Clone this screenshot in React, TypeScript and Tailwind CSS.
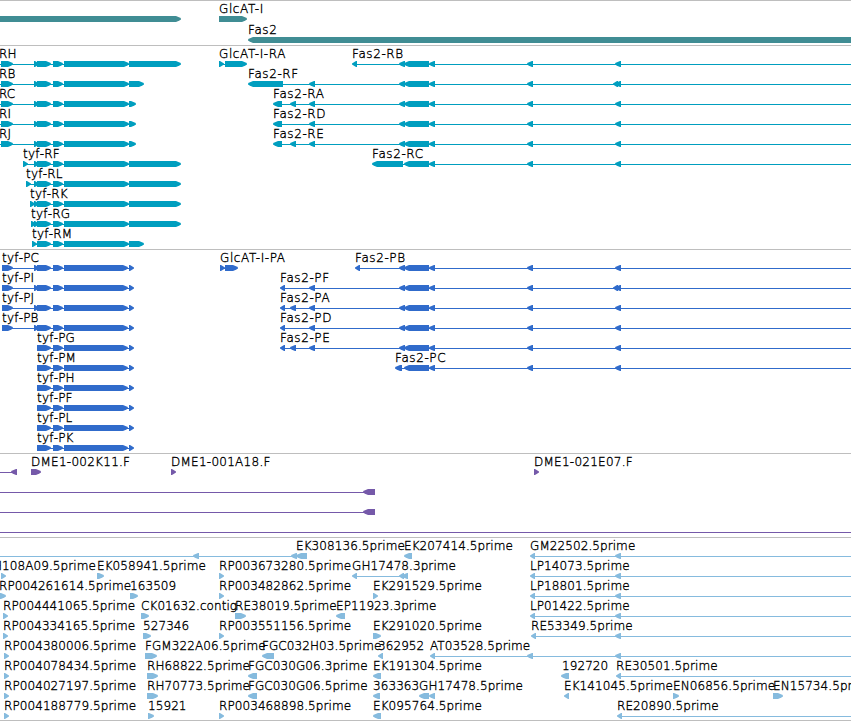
import React from "react";

type Feature = [number, number, "r" | "l"];
type Label = [number, string];
interface Row {
  labels?: Label[];
  features?: Feature[];
  lines?: [number, number][];
}

const WIDTH = 851;

// Head-only arrow for short features, block with a pointed end otherwise.
function featurePath([a, b, dir]: Feature) {
  const head = Math.min(6, b - a);
  if (dir === "r") return `M${a} 0H${b - head + 1}L${b - 2} 1.2L${b} 2.4V3.6L${b - 2} 4.8L${b - head + 1} 6H${a}Z`;
  return `M${b} 0H${a + head - 1}L${a + 2} 1.2L${a} 2.4V3.6L${a + 2} 4.8L${a + head - 1} 6H${b}Z`;
}

function labelTracking(text: string) {
  if (text.startsWith("Fas2") || text.startsWith("Glc")) return "tracking-[0.6px]";
  if (text.startsWith("tyf")) return "tracking-[0.2px]";
  if (text.startsWith("DME1")) return "tracking-[0.26px]";
  return "tracking-[0.08px]";
}

function TrackRow({ row, color, tall }: { row: Row; color: string; tall?: boolean }) {
  return (
    <div className={`relative w-full shrink-0 ${tall ? "h-[21px]" : "h-5"}`}>
      <svg className="block overflow-visible" width={WIDTH} height={20}>
        <g transform="translate(0 15)" fill={color}>
          {(row.lines ?? []).map(([a, b], i) => (
            <rect key={i} x={a} y={3} width={b - a} height={1} />
          ))}
          {(row.features ?? []).map((f, i) => (
            <path key={i} d={featurePath(f)} />
          ))}
        </g>
      </svg>
      {(row.labels ?? []).map(([x, text]) => (
        <span
          key={text}
          className={`absolute top-px whitespace-pre leading-[14px] ${labelTracking(text)}`}
          style={{ left: x }}
        >
          {text}
        </span>
      ))}
    </div>
  );
}

const geneRows: Row[] = [
  { labels: [[219, "GlcAT-I"]], features: [[-10, 181, "r"], [219, 247, "r"]] },
  { labels: [[248, "Fas2"]], features: [[248, 870, "l"]] },
];

const fasTail: Feature[] = [[404, 429, "l"], [429, 435, "l"], [527, 533, "l"], [615, 621, "l"]];
const fasMid: Feature[] = [[399, 405, "l"], ...fasTail];

const tyf = (last: number, ...first: Feature[]): Feature[] => [
  ...first, [37, 51, "r"], [53, 63, "r"], [64, 129, "r"], [129, last, "r"],
];
const notch: Feature = [34, 39, "r"];

const transcriptRows: Row[] = [
  {
    labels: [[-1, "RH"], [219, "GlcAT-I-RA"], [352, "Fas2-RB"]],
    lines: [[0, 180], [219, 240], [353, 851]],
    features: [...tyf(181, [1, 13, "r"], notch), [219, 224, "r"], [225, 247, "r"], [352, 357, "l"], ...fasMid],
  },
  {
    labels: [[-1, "RB"], [248, "Fas2-RF"]],
    lines: [[0, 140], [255, 851]],
    features: [...tyf(144, [1, 13, "r"], notch), [248, 283, "l"], [309, 315, "l"], ...fasMid, [613, 618, "l"]],
  },
  {
    labels: [[-1, "RC"], [273, "Fas2-RA"]],
    lines: [[0, 135], [280, 851]],
    features: [...tyf(136, [1, 13, "r"], notch), [273, 282, "l"], [290, 296, "l"], [309, 315, "l"], ...fasMid],
  },
  {
    labels: [[-1, "RI"], [273, "Fas2-RD"]],
    lines: [[0, 135], [280, 851]],
    features: [...tyf(136, [1, 13, "r"], notch), [273, 282, "l"], [309, 315, "l"], ...fasMid],
  },
  {
    labels: [[-1, "RJ"], [273, "Fas2-RE"]],
    lines: [[0, 135], [280, 851]],
    features: [...tyf(136, [1, 13, "r"], notch), [273, 282, "l"], [290, 296, "l"], [309, 315, "l"], ...fasMid],
  },
  {
    labels: [[23, "tyf-RF"], [372, "Fas2-RC"]],
    lines: [[23, 180], [380, 851]],
    features: [...tyf(181, [23, 28, "r"], notch), [372, 403, "l"], ...fasTail],
  },
  { labels: [[26, "tyf-RL"]], lines: [[26, 180]], features: tyf(181, [26, 31, "r"], notch) },
  { labels: [[30, "tyf-RK"]], lines: [[30, 180]], features: tyf(181, [30, 35, "r"], notch) },
  { labels: [[31, "tyf-RG"]], lines: [[31, 180]], features: tyf(181, [31, 36, "r"], notch) },
  { labels: [[32, "tyf-RM"]], lines: [[32, 140]], features: tyf(144, [32, 37, "r"]) },
];

const tyfP = (...first: Feature[]): Feature[] => [
  ...first, [37, 51, "r"], [53, 63, "r"], [64, 128, "r"], [129, 134, "r"],
];
const shortP = (name: string): Row => ({
  labels: [[37, name]],
  lines: [[37, 133]],
  features: tyfP(),
});

const proteinRows: Row[] = [
  {
    labels: [[2, "tyf-PC"], [220, "GlcAT-I-PA"], [355, "Fas2-PB"]],
    lines: [[2, 133], [220, 235], [356, 851]],
    features: [...tyfP([2, 13, "r"], notch), [220, 225, "r"], [225, 238, "r"], [355, 360, "l"], ...fasMid],
  },
  {
    labels: [[2, "tyf-PI"], [280, "Fas2-PF"]],
    lines: [[2, 133], [281, 851]],
    features: [...tyfP([2, 13, "r"], notch), [280, 285, "l"], [309, 315, "l"], ...fasMid, [613, 618, "l"]],
  },
  {
    labels: [[2, "tyf-PJ"], [280, "Fas2-PA"]],
    lines: [[2, 133], [281, 851]],
    features: [...tyfP([2, 13, "r"], notch), [280, 285, "l"], [290, 296, "l"], [309, 315, "l"], ...fasMid],
  },
  {
    labels: [[2, "tyf-PB"], [280, "Fas2-PD"]],
    lines: [[2, 133], [281, 851]],
    features: [...tyfP([2, 13, "r"], notch), [280, 285, "l"], [309, 315, "l"], ...fasMid],
  },
  {
    labels: [[37, "tyf-PG"], [280, "Fas2-PE"]],
    lines: [[37, 133], [281, 851]],
    features: [...tyfP(), [280, 285, "l"], [290, 296, "l"], [309, 315, "l"], ...fasMid],
  },
  {
    labels: [[37, "tyf-PM"], [395, "Fas2-PC"]],
    lines: [[37, 133], [396, 851]],
    features: [...tyfP(), [395, 402, "l"], ...fasTail],
  },
  shortP("tyf-PH"),
  shortP("tyf-PF"),
  shortP("tyf-PL"),
  shortP("tyf-PK"),
];

const bacRows: Row[] = [
  {
    labels: [[31, "DME1-002K11.F"], [171, "DME1-001A18.F"], [534, "DME1-021E07.F"]],
    lines: [[0, 16]],
    features: [[11, 17, "l"], [31, 41, "r"], [171, 176, "r"], [534, 539, "r"]],
  },
  { lines: [[0, 370]], features: [[363, 375, "l"]] },
  { lines: [[0, 370]], features: [[363, 375, "l"]] },
  { lines: [[0, 851]] },
];

const estRows: Row[] = [
  {
    labels: [[296, "EK308136.5prime"], [404, "EK207414.5prime"], [530, "GM22502.5prime"]],
    lines: [[0, 303], [531, 851]],
    features: [[193, 199, "l"], [291, 297, "l"], [296, 307, "l"], [404, 412, "l"], [530, 535, "l"], [615, 621, "l"]],
  },
  {
    labels: [[-7, "H108A09.5prime"], [97, "EK058941.5prime"], [219, "RP003673280.5prime"], [352, "GH17478.3prime"], [530, "LP14073.5prime"]],
    lines: [[353, 404], [531, 851]],
    features: [[1, 6, "r"], [97, 104, "r"], [219, 224, "r"], [352, 357, "l"], [399, 404, "l"], [402, 408, "l"], [530, 535, "l"], [615, 621, "l"]],
  },
  {
    labels: [[-1, "RP004261614.5prime"], [130, "163509"], [219, "RP003482862.5prime"], [373, "EK291529.5prime"], [530, "LP18801.5prime"]],
    lines: [[531, 851]],
    features: [[-2, 6, "r"], [130, 138, "r"], [219, 224, "r"], [373, 378, "r"], [530, 535, "l"], [615, 621, "l"]],
  },
  {
    labels: [[3, "RP004441065.5prime"], [141, "CK01632.contig"], [235, "RE38019.5prime"], [336, "EP11923.3prime"], [530, "LP01422.5prime"]],
    lines: [[531, 851]],
    features: [[3, 8, "r"], [141, 149, "r"], [235, 246, "r"], [336, 345, "l"], [530, 535, "l"], [615, 621, "l"]],
  },
  {
    labels: [[3, "RP004334165.5prime"], [143, "527346"], [219, "RP003551156.5prime"], [373, "EK291020.5prime"], [531, "RE53349.5prime"]],
    lines: [[532, 851]],
    features: [[3, 8, "r"], [143, 151, "r"], [219, 224, "r"], [373, 381, "r"], [531, 536, "l"], [615, 621, "l"]],
  },
  {
    labels: [[4, "RP004380006.5prime"], [145, "FGM322A06.5prime"], [262, "FGC032H03.5prime"], [378, "362952"], [430, "AT03528.5prime"]],
    lines: [[431, 851]],
    features: [[4, 9, "r"], [145, 157, "r"], [262, 274, "l"], [378, 383, "l"], [430, 435, "l"], [527, 533, "l"], [615, 621, "l"]],
  },
  {
    labels: [[4, "RP004078434.5prime"], [147, "RH68822.5prime"], [248, "FGC030G06.3prime"], [373, "EK191304.5prime"], [562, "192720"], [616, "RE30501.5prime"]],
    lines: [[617, 851]],
    features: [[4, 9, "r"], [147, 158, "r"], [248, 257, "l"], [373, 381, "l"], [561, 569, "l"], [616, 621, "l"]],
  },
  {
    labels: [[4, "RP004027197.5prime"], [147, "RH70773.5prime"], [248, "FGC030G06.5prime"], [373, "363363"], [419, "GH17478.5prime"], [564, "EK141045.5prime"], [673, "EN06856.5prime"], [773, "EN15734.5prime"]],
    features: [[4, 9, "r"], [147, 158, "r"], [248, 257, "l"], [373, 380, "l"], [419, 429, "l"], [429, 435, "l"], [564, 569, "l"], [673, 679, "r"], [773, 783, "r"]],
  },
  {
    labels: [[4, "RP004188779.5prime"], [148, "15921"], [219, "RP003468898.5prime"], [373, "EK095764.5prime"], [617, "RE20890.5prime"]],
    lines: [[618, 851]],
    features: [[4, 9, "r"], [148, 154, "r"], [219, 224, "r"], [373, 381, "l"], [617, 622, "l"]],
  },
];

const tracks = [
  { id: "genes", color: "#408d94", rows: geneRows, size: "h-[45px]", tall: true },
  { id: "transcripts", color: "#009ebf", rows: transcriptRows, size: "h-[204px]" },
  { id: "proteins", color: "#306bcb", rows: proteinRows, size: "h-[204px]" },
  { id: "bac-ends", color: "#7559a9", rows: bacRows, size: "h-[84px]" },
  { id: "ests", color: "#86bbde", rows: estRows, size: "h-[183px]" },
];

export default function App() {
  return (
    <main className="flex h-[721px] w-[851px] flex-col overflow-hidden bg-white font-['DejaVu_Sans',sans-serif] text-[12px] font-extralight text-black [-webkit-text-stroke:0.35px_#000]">
      {tracks.map((t) => (
        <section key={t.id} className={`flex shrink-0 flex-col border-t border-[#bebebe] ${t.size}`}>
          {t.rows.map((row, i) => (
            <TrackRow key={i} row={row} color={t.color} tall={t.tall} />
          ))}
        </section>
      ))}
      <div className="h-px shrink-0 bg-[#bebebe]" />
    </main>
  );
}
